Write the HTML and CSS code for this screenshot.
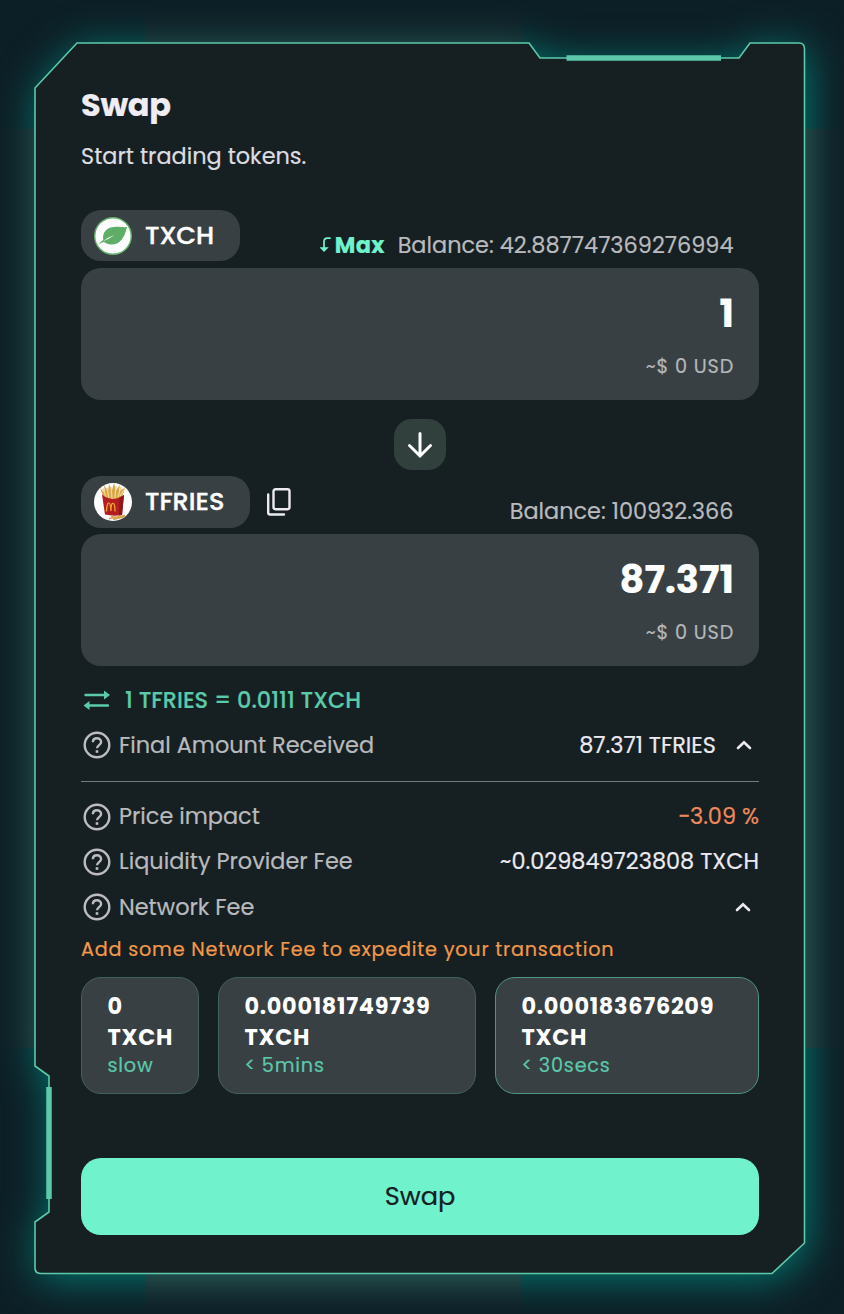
FILE: index.html
```html
<!DOCTYPE html>
<html lang="en">
<head>
<meta charset="utf-8">
<title>Swap</title>
<link rel="stylesheet" href="styles.css">
</head>
<body>
<svg class="frame" viewBox="0 0 844 1314" aria-hidden="true">
  <defs>
    <filter id="soft" x="-20%" y="-20%" width="140%" height="140%" color-interpolation-filters="sRGB"><feGaussianBlur stdDeviation="21"/></filter>
    <clipPath id="corners"><path d="M0 0H146V129H0ZM521 0H844V129H521ZM0 1048H146V1314H0ZM521 1048H844V1314H521Z"/></clipPath>
    <clipPath id="edges"><path d="M146 0H521V129H146ZM146 1048H521V1314H146ZM0 129H844V1048H0Z"/></clipPath>
    <path id="outline" d="M77 43H529L540 58H739L750 43H799Q804.500 43 804.500 49V1243L772 1273.500H41Q35 1273.500 35 1268V1222L49 1212V1076L35 1066V88Z"/>
  </defs>
  <g clip-path="url(#corners)"><g transform="translate(3 5)"><use href="#outline" class="glow-corner" filter="url(#soft)"/></g></g>
  <g clip-path="url(#edges)"><g transform="translate(3 5)"><use href="#outline" class="glow-edge" filter="url(#soft)"/></g></g>
  <use href="#outline" class="outline"/>
  <path class="outline-bar" d="M566.500 58H721M49 1087V1199"/>
</svg>

<main class="panel">
  <h1 class="title">Swap</h1>
  <p class="subtitle">Start trading tokens.</p>

  <section class="token-head">
    <button class="chip chip-from">
      <svg class="coin" viewBox="0 0 38 38"><circle cx="19" cy="19" r="18.300" fill="#fff" stroke="#5fae68" stroke-width="1.400"/><path fill="#5fae68" d="M33 10C31 20 26 28 17 27.500C13.500 27.400 11.500 26 10 25C7.500 25.500 6 26.500 5 27.500C5.500 25.500 7.500 24 9.300 23C8 15 13 10.500 20 10C25 9.500 30 10.500 33 10Z"/><path d="M9 24.500Q14 20 21 17.700Q15 21.800 9 24.500Z" fill="#fff"/></svg>
      <span>TXCH</span>
    </button>
    <div class="balance">
      <button class="max"><svg class="max-icon" viewBox="0 0 11 16"><path d="M10 1.200H7.500Q4 1.200 4 4.800V13M1.300 11L4 13.700L6.700 11Z"/></svg><span>Max</span></button>
      <span class="balance-text">Balance: 42.887747369276994</span>
    </div>
  </section>
  <section class="field"><strong class="amount">1</strong><span class="usd">~$ 0 USD</span></section>

  <button class="flip" aria-label="Flip tokens"><svg viewBox="0 0 28 28"><path d="M14 2.500V25M3.500 14.500L14 25L24.500 14.500"/></svg></button>

  <section class="token-head">
    <button class="chip chip-to">
      <svg class="coin" viewBox="0 0 38 38"><circle cx="19" cy="19" r="19" fill="#fff"/>
        <path d="M9 13L6 5L11 10L10 2L14 8L15 1L18 7L20 0L22 7L26 2L25 8L31 5L28 14L24 18H13Z" fill="#d9a54b"/>
        <path d="M12 14L9 5M15 15L13 5M18 16L17 4M21 15L22 3M24 14L27 4M26 13L30 7" stroke="#f2d58b" stroke-width="1.300" fill="none"/>
        <path d="M8 11.500Q18 20 30 12L28 32Q19 33.500 11 31.500Z" fill="#b41d22"/><path d="M25.500 14.500L30 12L28 32L25 32.500Z" fill="#8f161b"/>
        <path d="M12.500 28.500Q13 19 15 20Q16.500 20.500 17 28Q17 20 18.800 20.300Q21 20 21 28.500" fill="none" stroke="#e7a72c" stroke-width="1.300"/>
        <path d="M15 35.500L31 32.500M19 36.500L31 33.500M17 33.500L27 35" stroke="#d9a54b" stroke-width="1.500"/></svg>
      <span>TFRIES</span>
    </button>
    <svg class="copy" viewBox="0 0 26 30"><rect x="7.500" y="2.200" width="16" height="20" rx="2"/><path d="M2.200 7.500V25.500Q2.200 27.500 4.200 27.500H18"/></svg>
    <div class="balance"><span class="balance-text">Balance: 100932.366</span></div>
  </section>
  <section class="field"><strong class="amount">87.371</strong><span class="usd">~$ 0 USD</span></section>

  <div class="rate">
    <svg class="rate-icon" viewBox="0 0 28 22"><path d="M2.500 6H22M6 16.500H25" class="rate-line"/><path d="M21 1.500L27 6L21 10.500ZM6.500 12L.5 16.500L6.500 21Z" class="rate-tip"/></svg>
    <span>1 TFRIES = 0.0111 TXCH</span>
  </div>

  <div class="row row-final">
    <svg class="help" viewBox="0 0 28 28"><circle cx="14" cy="14" r="12.300"/><path d="M9.900 11.200C9.900 8.800 11.700 7.300 14 7.300S18.100 8.900 18.100 11.100C18.100 13.900 14 14.300 14 17.300"/><rect x="12.700" y="19.200" width="2.600" height="2.600"/></svg>
    <span class="label">Final Amount Received</span>
    <span class="value">87.371 TFRIES</span>
    <svg class="chevron" viewBox="0 0 16 10"><path d="M2 8L8 2.200L14 8"/></svg>
  </div>
  <hr class="divider">
  <div class="row row-detail">
    <svg class="help" viewBox="0 0 28 28"><circle cx="14" cy="14" r="12.300"/><path d="M9.900 11.200C9.900 8.800 11.700 7.300 14 7.300S18.100 8.900 18.100 11.100C18.100 13.900 14 14.300 14 17.300"/><rect x="12.700" y="19.200" width="2.600" height="2.600"/></svg>
    <span class="label">Price impact</span>
    <span class="value value-impact">−3.09 %</span>
  </div>
  <div class="row row-detail">
    <svg class="help" viewBox="0 0 28 28"><circle cx="14" cy="14" r="12.300"/><path d="M9.900 11.200C9.900 8.800 11.700 7.300 14 7.300S18.100 8.900 18.100 11.100C18.100 13.900 14 14.300 14 17.300"/><rect x="12.700" y="19.200" width="2.600" height="2.600"/></svg>
    <span class="label">Liquidity Provider Fee</span>
    <span class="value">~0.029849723808 TXCH</span>
  </div>
  <div class="row row-network">
    <svg class="help" viewBox="0 0 28 28"><circle cx="14" cy="14" r="12.300"/><path d="M9.900 11.200C9.900 8.800 11.700 7.300 14 7.300S18.100 8.900 18.100 11.100C18.100 13.900 14 14.300 14 17.300"/><rect x="12.700" y="19.200" width="2.600" height="2.600"/></svg>
    <span class="label">Network Fee</span>
    <svg class="chevron chevron-end" viewBox="0 0 16 10"><path d="M2 8L8 2.200L14 8"/></svg>
  </div>
  <p class="hint">Add some Network Fee to expedite your transaction</p>

  <div class="fees">
    <button class="fee"><b class="fee-amount">0<br>TXCH</b><span class="fee-time">slow</span></button>
    <button class="fee"><b class="fee-amount">0.000181749739<br>TXCH</b><span class="fee-time">&lt; 5mins</span></button>
    <button class="fee fee-selected"><b class="fee-amount">0.000183676209<br>TXCH</b><span class="fee-time">&lt; 30secs</span></button>
  </div>
  <button class="submit">Swap</button>
</main>
</body>
</html>
```
FILE: styles.css
```css
* { box-sizing: border-box; }
body { margin: 0; width: 844px; height: 1314px; overflow: hidden; background: #0d1f26; color: #fff; font-family: Poppins, Inter, sans-serif; -webkit-text-stroke: .2px currentColor; }
button { border: 0; margin: 0; padding: 0; font: inherit; color: inherit; text-align: left; }
h1, p { margin: 0; }
svg { flex: none; display: block; }
.frame { position: absolute; left: 0; top: 0; width: 844px; height: 1314px; }
.glow-corner { fill: #037a73; }
.glow-edge { fill: #316a64; }
.outline { fill: #162022; stroke: #5cc9aa; stroke-width: 1.600; }
.outline-bar { fill: none; stroke: #5cc9aa; stroke-width: 5.500; }
.panel { position: relative; display: flex; flex-direction: column; padding: 80px 85px 0 81px; }
.title { height: 50px; line-height: 50px; font-size: 32px; font-weight: 700; color: #efedf2; letter-spacing: -.3px; }
.subtitle { height: 40px; line-height: 40px; margin: 6px 0 34px; font-size: 22.400px; color: #dddce0; }
.token-head { display: flex; align-items: flex-start; height: 58px; }
.chip { display: flex; align-items: center; gap: 13px; height: 51px; padding-left: 13px; border-radius: 20px; background: #394043; font-size: 25.600px; font-weight: 500; -webkit-text-stroke: .4px currentColor; }
.chip-from { width: 159px; }
.chip-to { width: 169px; height: 52px; }
.chip-to span { padding-bottom: 2px; }
.coin { width: 38px; height: 38px; }
.copy { width: 26px; height: 30px; margin: 11px 0 0 16px; fill: none; stroke: #eceaf0; stroke-width: 2.400; stroke-linecap: round; }
.balance { display: flex; align-items: center; gap: 13px; margin: 15px 25.500px 0 auto; height: 40px; font-size: 22.400px; color: #b9babd; }
.max { display: flex; align-items: center; gap: 4px; background: none; color: #70f3cd; font-weight: 700; letter-spacing: .3px; }
.max-icon { width: 11px; height: 16px; fill: #70f3cd; stroke: #70f3cd; stroke-width: 1.700; stroke-linecap: round; }
.max-icon path { fill: none; }
.field { display: flex; flex-direction: column; align-items: flex-end; height: 132px; padding: 21px 25px; border-radius: 20px; background: #394043; }
.amount { height: 50px; line-height: 50px; font-size: 38.400px; font-weight: 700; }
.usd { height: 30px; line-height: 30px; margin-top: 13px; font-size: 19.200px; letter-spacing: .8px; color: #b4b7b9; }
.flip { align-self: center; display: grid; place-items: center; width: 52px; height: 51px; margin: 19px 0 6px; border-radius: 18px; background: #31403c; }
.flip svg { width: 28px; height: 28px; fill: none; stroke: #fff; stroke-width: 3; stroke-linecap: round; }
.rate { display: flex; align-items: center; gap: 14px; height: 40px; margin: 14px 0 2px; padding-left: 2px; font-size: 22.400px; font-weight: 500; color: #5cc9aa; }
.rate-icon { width: 28px; height: 22px; }
.rate-line { stroke: #5cc9aa; stroke-width: 2.400; stroke-linecap: round; }
.rate-tip { fill: #5cc9aa; }
.row { display: flex; align-items: center; height: 45px; padding-left: 2px; font-size: 22.400px; }
.row-final { height: 46px; }
.row-detail span { padding-bottom: 2px; }
.help { width: 28px; height: 28px; margin-right: 8px; fill: none; stroke: #bdbcc0; stroke-width: 2.400; }
.help rect { fill: #bdbcc0; stroke: none; }
.label { color: #b9babd; }
.value { margin-left: auto; color: #eceaf0; }
.value-impact { color: #ef895c; }
.chevron { width: 16px; height: 10px; margin: 0 7px 0 20px; fill: none; stroke: #eceaf0; stroke-width: 2.600; stroke-linecap: round; }
.chevron-end { margin: 0 8px 0 auto; }
.divider { width: 100%; height: 1px; margin: 13px 0 12px; border: 0; background: #767b7b; }
.row-network { height: 46px; }
.hint { height: 36px; line-height: 36px; margin: 2px 0 9px; font-size: 19.200px; letter-spacing: .8px; color: #f2994a; }
.fees { display: grid; grid-template-columns: 118px 258px 264px; gap: 19px; }
.fee { display: flex; flex-direction: column; justify-content: flex-start; height: 117px; padding: 13px 0 13px 25.500px; border: 1px solid #426259; border-radius: 20px; background: #394043; }
.fee-selected { border-color: #4b967f; }
.fee-amount { font-size: 22.400px; font-weight: 700; line-height: 31px; letter-spacing: .7px; -webkit-text-stroke: 0; }
.fee-time { font-size: 19.200px; line-height: 26px; letter-spacing: .8px; color: #5cc9aa; }
.submit { height: 77px; margin-top: 64px; border-radius: 20px; background: #70f3cd; color: #162022; text-align: center; font-size: 25.600px; }
```
